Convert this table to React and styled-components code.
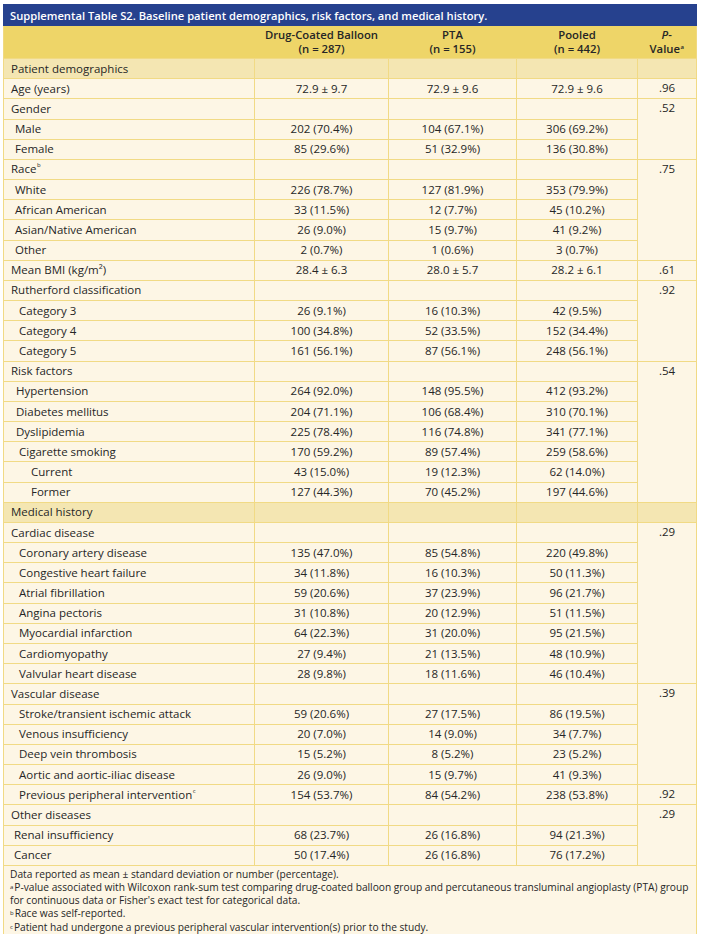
import styled, { createGlobalStyle } from "styled-components";

const rows = [
  { label: "Patient demographics", section: true },
  { label: "Age (years)", v: ["72.9 ± 9.7", "72.9 ± 9.6", "72.9 ± 9.6"], p: ".96", span: 1 },
  { label: "Gender", p: ".52", span: 3 },
  { label: "Male", indent: 11, v: ["202 (70.4%)", "104 (67.1%)", "306 (69.2%)"] },
  { label: "Female", indent: 11, v: ["85 (29.6%)", "51 (32.9%)", "136 (30.8%)"] },
  { label: "Race", sup: "b", p: ".75", span: 5 },
  { label: "White", indent: 11, v: ["226 (78.7%)", "127 (81.9%)", "353 (79.9%)"] },
  { label: "African American", indent: 11, v: ["33 (11.5%)", "12 (7.7%)", "45 (10.2%)"] },
  { label: "Asian/Native American", indent: 11, v: ["26 (9.0%)", "15 (9.7%)", "41 (9.2%)"] },
  { label: "Other", indent: 11, v: ["2 (0.7%)", "1 (0.6%)", "3 (0.7%)"] },
  { label: "Mean BMI (kg/m²)", v: ["28.4 ± 6.3", "28.0 ± 5.7", "28.2 ± 6.1"], p: ".61", span: 1 },
  { label: "Rutherford classification", p: ".92", span: 4 },
  { label: "Category 3", indent: 15, v: ["26 (9.1%)", "16 (10.3%)", "42 (9.5%)"] },
  { label: "Category 4", indent: 15, v: ["100 (34.8%)", "52 (33.5%)", "152 (34.4%)"] },
  { label: "Category 5", indent: 15, v: ["161 (56.1%)", "87 (56.1%)", "248 (56.1%)"] },
  { label: "Risk factors", p: ".54", span: 7 },
  { label: "Hypertension", indent: 12, v: ["264 (92.0%)", "148 (95.5%)", "412 (93.2%)"] },
  { label: "Diabetes mellitus", indent: 12, v: ["204 (71.1%)", "106 (68.4%)", "310 (70.1%)"] },
  { label: "Dyslipidemia", indent: 12, v: ["225 (78.4%)", "116 (74.8%)", "341 (77.1%)"] },
  { label: "Cigarette smoking", indent: 15, v: ["170 (59.2%)", "89 (57.4%)", "259 (58.6%)"] },
  { label: "Current", indent: 27, v: ["43 (15.0%)", "19 (12.3%)", "62 (14.0%)"] },
  { label: "Former", indent: 27, v: ["127 (44.3%)", "70 (45.2%)", "197 (44.6%)"] },
  { label: "Medical history", section: true },
  { label: "Cardiac disease", p: ".29", span: 8 },
  { label: "Coronary artery disease", indent: 15, v: ["135 (47.0%)", "85 (54.8%)", "220 (49.8%)"] },
  { label: "Congestive heart failure", indent: 15, v: ["34 (11.8%)", "16 (10.3%)", "50 (11.3%)"] },
  { label: "Atrial fibrillation", indent: 15, v: ["59 (20.6%)", "37 (23.9%)", "96 (21.7%)"] },
  { label: "Angina pectoris", indent: 15, v: ["31 (10.8%)", "20 (12.9%)", "51 (11.5%)"] },
  { label: "Myocardial infarction", indent: 15, v: ["64 (22.3%)", "31 (20.0%)", "95 (21.5%)"] },
  { label: "Cardiomyopathy", indent: 15, v: ["27 (9.4%)", "21 (13.5%)", "48 (10.9%)"] },
  { label: "Valvular heart disease", indent: 15, v: ["28 (9.8%)", "18 (11.6%)", "46 (10.4%)"] },
  { label: "Vascular disease", p: ".39", span: 5 },
  { label: "Stroke/transient ischemic attack", indent: 15, v: ["59 (20.6%)", "27 (17.5%)", "86 (19.5%)"] },
  { label: "Venous insufficiency", indent: 15, v: ["20 (7.0%)", "14 (9.0%)", "34 (7.7%)"] },
  { label: "Deep vein thrombosis", indent: 15, v: ["15 (5.2%)", "8 (5.2%)", "23 (5.2%)"] },
  { label: "Aortic and aortic-iliac disease", indent: 15, v: ["26 (9.0%)", "15 (9.7%)", "41 (9.3%)"] },
  { label: "Previous peripheral intervention", sup: "c", indent: 15, v: ["154 (53.7%)", "84 (54.2%)", "238 (53.8%)"], p: ".92", span: 1 },
  { label: "Other diseases", p: ".29", span: 3 },
  { label: "Renal insufficiency", indent: 10, v: ["68 (23.7%)", "26 (16.8%)", "94 (21.3%)"] },
  { label: "Cancer", indent: 10, v: ["50 (17.4%)", "26 (16.8%)", "76 (17.2%)"] },
];

const GlobalStyle = createGlobalStyle`
  body {
    margin: 0;
    background: #ffffff;
    font-family: "Open Sans", "Liberation Sans", sans-serif;
    color: #262626;
  }
`;

export default function App() {
  return (
    <Page>
      <GlobalStyle />
      <Table>
        <colgroup>
          <col style={{ width: 251 }} />
          <col style={{ width: 134 }} />
          <col style={{ width: 128 }} />
          <col style={{ width: 121 }} />
          <col style={{ width: 59 }} />
        </colgroup>
        <thead>
          <tr>
            <Title colSpan={5}>
              Supplemental Table S2. Baseline patient demographics, risk factors, and medical history.
            </Title>
          </tr>
          <tr>
            <Head />
            <Head>
              Drug-Coated Balloon
              <br />
              (n = 287)
            </Head>
            <Head>
              PTA
              <br />
              (n = 155)
            </Head>
            <Head>
              Pooled
              <br />
              (n = 442)
            </Head>
            <Head>
              <em>P</em>-
              <br />
              Value<Sup>a</Sup>
            </Head>
          </tr>
        </thead>
        <tbody>
          {rows.map((row, i) =>
            row.section ? (
              <tr key={i}>
                <SectionCell>{row.label}</SectionCell>
                <SectionCell />
                <SectionCell />
                <SectionCell />
                <SectionCell />
              </tr>
            ) : (
              <tr key={i}>
                <Label $indent={row.indent || 7}>
                  {row.label}
                  {row.sup && <Sup>{row.sup}</Sup>}
                </Label>
                {(row.v || ["", "", ""]).map((val, j) => (
                  <Value key={j}>{val}</Value>
                ))}
                {row.p && <PCell rowSpan={row.span}>{row.p}</PCell>}
              </tr>
            )
          )}
        </tbody>
        <tfoot>
          <tr>
            <Notes colSpan={5}>
              <NoteLine>Data reported as mean ± standard deviation or number (percentage).</NoteLine>
              <NoteLine>
                <NoteMark>a</NoteMark>P-value associated with Wilcoxon rank-sum test comparing drug-coated balloon
                group and percutaneous transluminal angioplasty (PTA) group for continuous data or Fisher's exact
                test for categorical data.
              </NoteLine>
              <NoteLine>
                <NoteMark>b</NoteMark>Race was self-reported.
              </NoteLine>
              <NoteLine>
                <NoteMark>c</NoteMark>Patient had undergone a previous peripheral vascular intervention(s) prior to
                the study.
              </NoteLine>
            </Notes>
          </tr>
        </tfoot>
      </Table>
    </Page>
  );
}

const Page = styled.div`
  padding: 4px 5px 3px 3px;
`;

const Table = styled.table`
  width: 694px;
  table-layout: fixed;
  border-collapse: collapse;
  background: #fdf6e5;
  border: 1px solid #f0d980;
  font-size: 11.5px;
`;

const Title = styled.th`
  box-sizing: border-box;
  height: 21px;
  padding: 0 6px;
  background: #26418e;
  color: #ffffff;
  text-align: left;
  font-weight: 600;
  font-size: 11.2px;
  border: 1px solid #26418e;
`;

const Head = styled.th`
  box-sizing: border-box;
  height: 33px;
  padding: 0 4px;
  background: #eed568;
  color: #262626;
  font-weight: 600;
  font-size: 11.3px;
  line-height: 14px;
  text-align: center;
  vertical-align: middle;

  em {
    font-style: italic;
  }
`;

const Cell = styled.td`
  box-sizing: border-box;
  height: 20.18px;
  padding: 0 6px;
  border: 1px solid #f1da85;
  white-space: nowrap;
  line-height: 18px;
`;

const SectionCell = styled(Cell)`
  background: #f4e6b2;
  padding-left: 7px;
`;

const Label = styled(Cell)`
  padding-left: ${(p) => p.$indent}px;
`;

const Value = styled(Cell)`
  text-align: center;
`;

const PCell = styled(Cell)`
  text-align: center;
  vertical-align: top;
`;

const Sup = styled.span`
  display: inline-block;
  font-size: 6px;
  line-height: 6px;
  vertical-align: top;
  margin-top: 2px;
  margin-left: 0.5px;
`;

const NoteMark = styled(Sup)`
  margin-top: 3px;
  margin-left: 0;
  margin-right: 1px;
`;

const Notes = styled.td`
  box-sizing: border-box;
  height: 66px;
  padding: 2px 3px 0 6px;
  font-size: 10.2px;
  line-height: 13.2px;
  border: 1px solid #f1da85;
  vertical-align: top;
`;

const NoteLine = styled.div`
  margin: 0;
`;
